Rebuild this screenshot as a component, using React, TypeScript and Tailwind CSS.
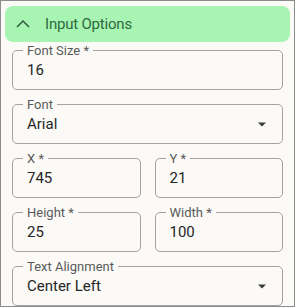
import { ReactNode } from "react";

function Field({
  label,
  value,
  select,
}: {
  label: string;
  value: string;
  select?: boolean;
}) {
  return (
    <div className="relative flex h-[40px] items-center rounded-[5px] border border-[#a3a3a0] pl-[14px] pr-[8px]">
      <span className="absolute -top-[8px] left-[10px] bg-[#fbfaf7] px-[4px] text-[13px] leading-[15px] text-[#5a5a5a]">
        {label}
      </span>
      <span className="flex-1 pt-[1px] text-[15px] text-[#262626]">{value}</span>
      {select && (
        <svg width="24" height="24" viewBox="0 0 24 24">
          <path d="M8 10.5l4 4 4-4z" fill="#3a3a3a" />
        </svg>
      )}
    </div>
  );
}

function Row({ children }: { children: ReactNode }) {
  return <div className="grid grid-cols-2 gap-[14px]">{children}</div>;
}

export default function App() {
  return (
    <div
      className="h-[308px] w-[296px] bg-white"
      style={{ fontFamily: "Roboto, 'Liberation Sans', sans-serif" }}
    >
      <div className="flex h-[307px] w-[295px] flex-col border border-[#8c8c8c] bg-[#fbfaf7] px-[4px] pt-[5px]">
        {/* header */}
        <div className="flex h-[36px] items-center gap-[13px] rounded-[8px] bg-[#a8f5b3] pl-[9px]">
          <svg width="18" height="18" viewBox="0 0 24 24">
            <path
              d="M4 16l8-8 8 8"
              fill="none"
              stroke="#2f5e3c"
              strokeWidth="2"
            />
          </svg>
          <span className="text-[15px] tracking-[-0.2px] text-[#2c6a3d]">Input Options</span>
        </div>

        {/* fields */}
        <div className="mt-[8px] flex flex-col gap-[14px] px-[7px]">
          <Field label="Font Size *" value="16" />
          <Field label="Font" value="Arial" select />
          <Row>
            <Field label="X *" value="745" />
            <Field label="Y *" value="21" />
          </Row>
          <Row>
            <Field label="Height *" value="25" />
            <Field label="Width *" value="100" />
          </Row>
          <Field label="Text Alignment" value="Center Left" select />
        </div>
      </div>
    </div>
  );
}
